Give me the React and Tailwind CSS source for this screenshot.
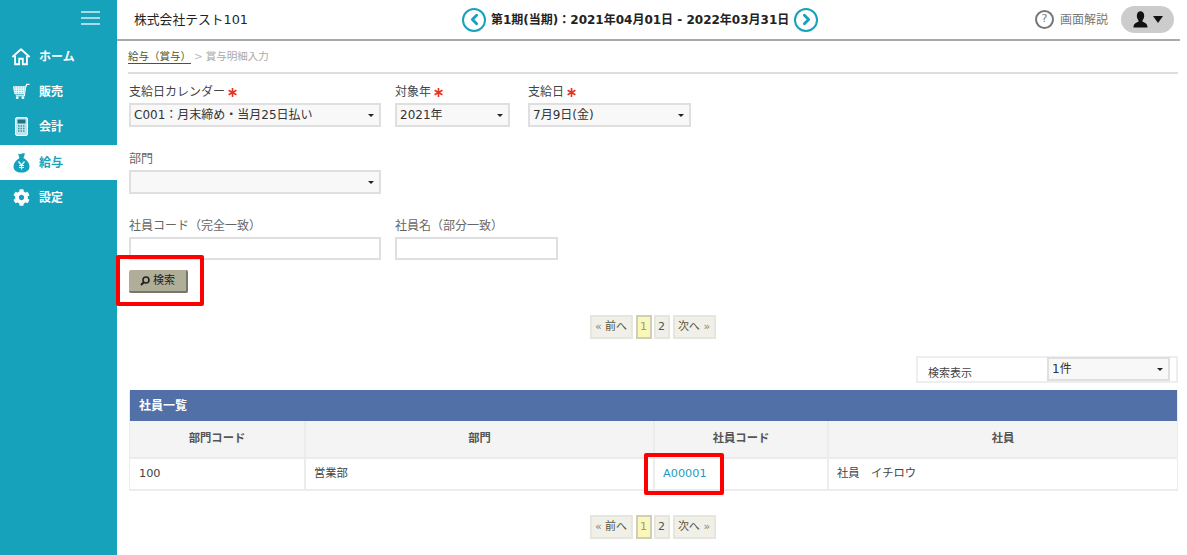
import React from "react";
import { FaCog } from "react-icons/fa";
import { ChevronLeft, ChevronRight } from "lucide-react";

const font = { fontFamily: '"DejaVu Sans", "Noto Sans CJK JP", sans-serif' };

const HomeIcon = () => (
  <svg width="20" height="19" viewBox="0 0 22 20" fill="none" stroke="#fff" strokeWidth="2">
    <path d="M1.500 10.500 11 2l9.500 8.500" strokeLinejoin="round" />
    <path d="M4.500 9v9.500h4.500v-6h4v6h4.500V9" />
  </svg>
);
const CartIcon = () => (
  <svg width="17" height="17" viewBox="0 0 18 18" fill="none" stroke="#fff">
    <path d="M0.500 4h13l-1.200 7.500H2z" fill="#8fd3df" />
    <path d="M3.500 4v7.500M6 4v7.500M8.500 4v7.500M11 4v7.500M1 6.500h12M1.500 9h11" strokeWidth="0.900" />
    <path d="M13.500 4 14.500 1.500H17.500M12.300 11.500 12 13.500H3" strokeWidth="1.300" />
    <circle cx="4.500" cy="15.500" r="1.500" fill="#fff" stroke="none" />
    <circle cx="10.500" cy="15.500" r="1.500" fill="#fff" stroke="none" />
  </svg>
);
const CalcIcon = () => (
  <svg width="13" height="19" viewBox="0 0 13 19">
    <rect x="0.500" y="0.500" width="12" height="18" rx="1.500" fill="#bfe6ed" stroke="#fff" />
    <rect x="2.500" y="2.500" width="8" height="4" fill="#17788a" />
    <path d="M3 9h7M3 11.500h7M3 14h7" stroke="#3f93a5" strokeWidth="1.500" strokeDasharray="1.500 1" />
  </svg>
);
const BagIcon = () => (
  <svg width="17" height="20" viewBox="0 0 17 20">
    <path d="M5 0.500c1.200.8 2 .8 3.500.2 1.500-.6 2.500-.4 3.500-.2L10.500 5c3.500 2 6 5 6 8.500 0 4-3.500 6-8 6s-8-2-8-6C.5 10 3 7 6.500 5z" fill="#17a2bb" />
    <path d="M5.500 8.500 8.500 12l3-3.500M8.500 12v4.500M6 12.500h5M6 14.500h5" stroke="#fff" strokeWidth="1.200" fill="none" />
  </svg>
);
const SearchIcon = () => (
  <svg width="10" height="10" viewBox="0 0 10 10" fill="none" stroke="#222" strokeWidth="1.600">
    <circle cx="6" cy="4" r="3" />
    <path d="M3.800 6.200 1 9" strokeWidth="2" />
  </svg>
);
const UserIcon = () => (
  <svg width="15" height="17" viewBox="0 0 15 17" fill="#111">
    <ellipse cx="7.500" cy="5" rx="3.700" ry="4.800" />
    <path d="M5.500 9v1.800C3 11.800.5 12.500.5 16.500h14c0-4-2.500-4.700-5-5.700V9z" />
  </svg>
);
const Star = () => (
  <svg width="9" height="9" viewBox="0 0 9 9" stroke="#e8321e" strokeWidth="1.600" className="ml-[3px] shrink-0">
    <path d="M4.500 0v9M.6 2.200l7.800 4.600M.6 6.800l7.800-4.600" />
  </svg>
);

const NavItem = ({ icon, label, active, className = "h-[35px]" }) => (
  <div className={`flex items-center ${className} ${active ? "bg-white text-[#17a2bb]" : "text-white"}`}>
    <div className="w-[39px] flex justify-center pl-[3px] shrink-0">{icon}</div>
    <span className="text-[12px] font-bold">{label}</span>
  </div>
);

const Select = ({ className = "", value }) => (
  <div className={`h-6 border-2 border-[#dfdfdf] bg-[#f8f8f8] flex items-center justify-between pl-[3px] pr-[5px] text-[12px] text-[#333] ${className}`}>
    <span>{value}</span>
    <span className="w-0 h-0 border-x-[3px] border-x-transparent border-t-[3px] border-t-[#222]" />
  </div>
);

const Field = ({ label, req, children, className }) => (
  <div className={className}>
    <div className={`h-[18px] pt-[2px] flex items-center text-[12px] mb-[3px] ${req ? "text-[#444]" : "text-[#666]"}`}>
      {label}
      {req && <Star />}
    </div>
    {children}
  </div>
);

const PageBtn = ({ children, className = "" }) => (
  <div className={`h-6 border-2 border-[#e6e6de] bg-[#f0f0e8] flex items-center justify-center text-[11px] text-[#554] ${className}`}>
    {children}
  </div>
);

const Pager = ({ className }) => (
  <div className={`flex justify-center pr-[2px] ${className}`}>
    <PageBtn className="w-[43px] mr-[3px]"><span className="text-[#887]">«</span>&nbsp;前へ</PageBtn>
    <PageBtn className="w-4 mr-[2px] !bg-[#fbf7b8] !border-[#cfcfb8] !text-[#998]">1</PageBtn>
    <PageBtn className="w-4 mr-[3px]">2</PageBtn>
    <PageBtn className="w-[43px]">次へ&nbsp;<span className="text-[#887]">»</span></PageBtn>
  </div>
);

const Th = ({ className, children }) => (
  <div className={`flex items-center justify-center text-[11.300px] font-bold text-[#555] border-r-2 border-[#ececec] last:border-r-0 ${className}`}>{children}</div>
);
const Td = ({ className, children }) => (
  <div className={`flex items-center text-[11.300px] text-[#444] border-r-2 border-[#ececec] last:border-r-0 ${className}`}>{children}</div>
);

const RoundNav = ({ children }) => (
  <div className="w-6 h-6 rounded-full border-2 border-[#17a2bb] flex items-center justify-center text-[#17a2bb]">{children}</div>
);

export default function App() {
  return (
    <div className="relative flex h-[555px] w-full overflow-hidden bg-white" style={font}>
      <aside className="w-[117px] shrink-0 bg-[#17a2bb]">
        <div className="h-[39px] flex flex-col items-end pt-[11px] pr-[17px] gap-[4px]">
          <div className="w-[19px] h-[2px] bg-[#a8dbe5]" />
          <div className="w-[19px] h-[2px] bg-[#a8dbe5]" />
          <div className="w-[19px] h-[2px] bg-[#a8dbe5]" />
        </div>
        <NavItem icon={<HomeIcon />} label="ホーム" />
        <NavItem icon={<CartIcon />} label="販売" />
        <NavItem icon={<CalcIcon />} label="会計" className="h-[36px] pb-[1px]" />
        <NavItem icon={<BagIcon />} label="給与" active />
        <NavItem icon={<FaCog size={17} color="#fff" />} label="設定" />
      </aside>

      <main className="w-[1063px] shrink-0">
        <header className="h-[41px] border-b-2 border-[#aaaaaa] flex items-center pl-[17px] pr-[6px]">
          <div className="text-[12.800px] text-[#222] w-[328px] shrink-0">株式会社テスト101</div>
          <div className="flex items-center gap-[5px]">
            <RoundNav><ChevronLeft size={17} strokeWidth={4} /></RoundNav>
            <div className="text-[12px] font-bold text-[#222] whitespace-nowrap">第1期(当期)：2021年04月01日 - 2022年03月31日</div>
            <RoundNav><ChevronRight size={17} strokeWidth={4} /></RoundNav>
          </div>
          <div className="flex items-center ml-auto">
            <div className="w-[19px] h-[19px] rounded-full border-2 border-[#777] flex items-center justify-center text-[11px] text-[#777] mr-[6px]">?</div>
            <span className="text-[12px] text-[#777] mr-[13px]">画面解説</span>
            <div className="w-[53px] h-[27px] rounded-full bg-[#cccccc] flex items-center justify-center gap-[5px]">
              <UserIcon />
              <span className="w-0 h-0 border-x-[5px] border-x-transparent border-t-[7px] border-t-[#111]" />
            </div>
          </div>
        </header>

        <div className="pl-3 pr-[2px]">
          <div className="h-[33px] flex items-center border-b-2 border-[#dddddd] text-[10.500px] -ml-[1px]">
            <span className="text-[#555520] border-b border-[#555520] leading-[13px]">給与（賞与）</span>
            <span className="text-[#bbb] mx-[3px]">&gt;</span>
            <span className="text-[#aaa]">賞与明細入力</span>
          </div>

          <div className="flex mt-[8px]">
            <Field label="支給日カレンダー" req className="w-[252px] mr-[14px]"><Select value="C001：月末締め・当月25日払い" /></Field>
            <Field label="対象年" req className="w-[115px] mr-[18px]"><Select value="2021年" /></Field>
            <Field label="支給日" req className="w-[163px]"><Select value="7月9日(金)" /></Field>
          </div>

          <Field label="部門" className="w-[252px] mt-[22px]"><Select value="" /></Field>

          <div className="flex mt-[22px]">
            <Field label="社員コード（完全一致）" className="w-[252px] mr-[14px]">
              <div className="h-[23px] border-2 border-[#dfdfdf] bg-white" />
            </Field>
            <Field label="社員名（部分一致）" className="w-[163px]">
              <div className="h-[23px] border-2 border-[#dfdfdf] bg-white" />
            </Field>
          </div>

          <button className="mt-[10px] w-[59px] h-[23px] pt-[1px] rounded-[2px] bg-[#b0ad98] border-r-2 border-b-2 border-[#77756a] flex items-center justify-center gap-[3px] text-[11px] text-[#222]">
            <SearchIcon />検索
          </button>

          <Pager className="mt-[22px]" />

          <div className="flex justify-end mt-[17px]">
            <div className="w-[262px] h-[27px] border-2 border-[#eeeeee] flex justify-between pr-[6px]">
              <span className="text-[11px] text-[#444] pl-[10px] pt-[8px]">検索表示</span>
              <Select value="1件" className="w-[123px] -mt-[1px]" />
            </div>
          </div>

          <div className="mt-[7px] border-b-2 border-x border-[#ececec]">
            <div className="h-[31px] bg-[#5270a8] flex items-center pl-[9px] text-[12px] font-bold text-white">社員一覧</div>
            <div className="flex h-[38px] bg-[#f4f4f4] border-b-2 border-[#ececec]">
              <Th className="w-[176px]">部門コード</Th>
              <Th className="w-[349px]">部門</Th>
              <Th className="w-[174px]">社員コード</Th>
              <Th className="flex-1">社員</Th>
            </div>
            <div className="flex h-[30px]">
              <Td className="w-[176px] pl-[9px]">100</Td>
              <Td className="w-[349px] pl-2">営業部</Td>
              <Td className="w-[174px] pl-2 !text-[#1f9bc4]">A00001</Td>
              <Td className="flex-1 pl-2">社員　イチロウ</Td>
            </div>
          </div>

          <Pager className="mt-[24px]" />
        </div>
      </main>

      <div className="absolute left-[116px] top-[255px] w-[88px] h-[51px] border-4 border-[#ff0000] rounded-[2px]" />
      <div className="absolute left-[644px] top-[453px] w-[80px] h-[42px] border-4 border-[#ff0000] rounded-[2px]" />
    </div>
  );
}
